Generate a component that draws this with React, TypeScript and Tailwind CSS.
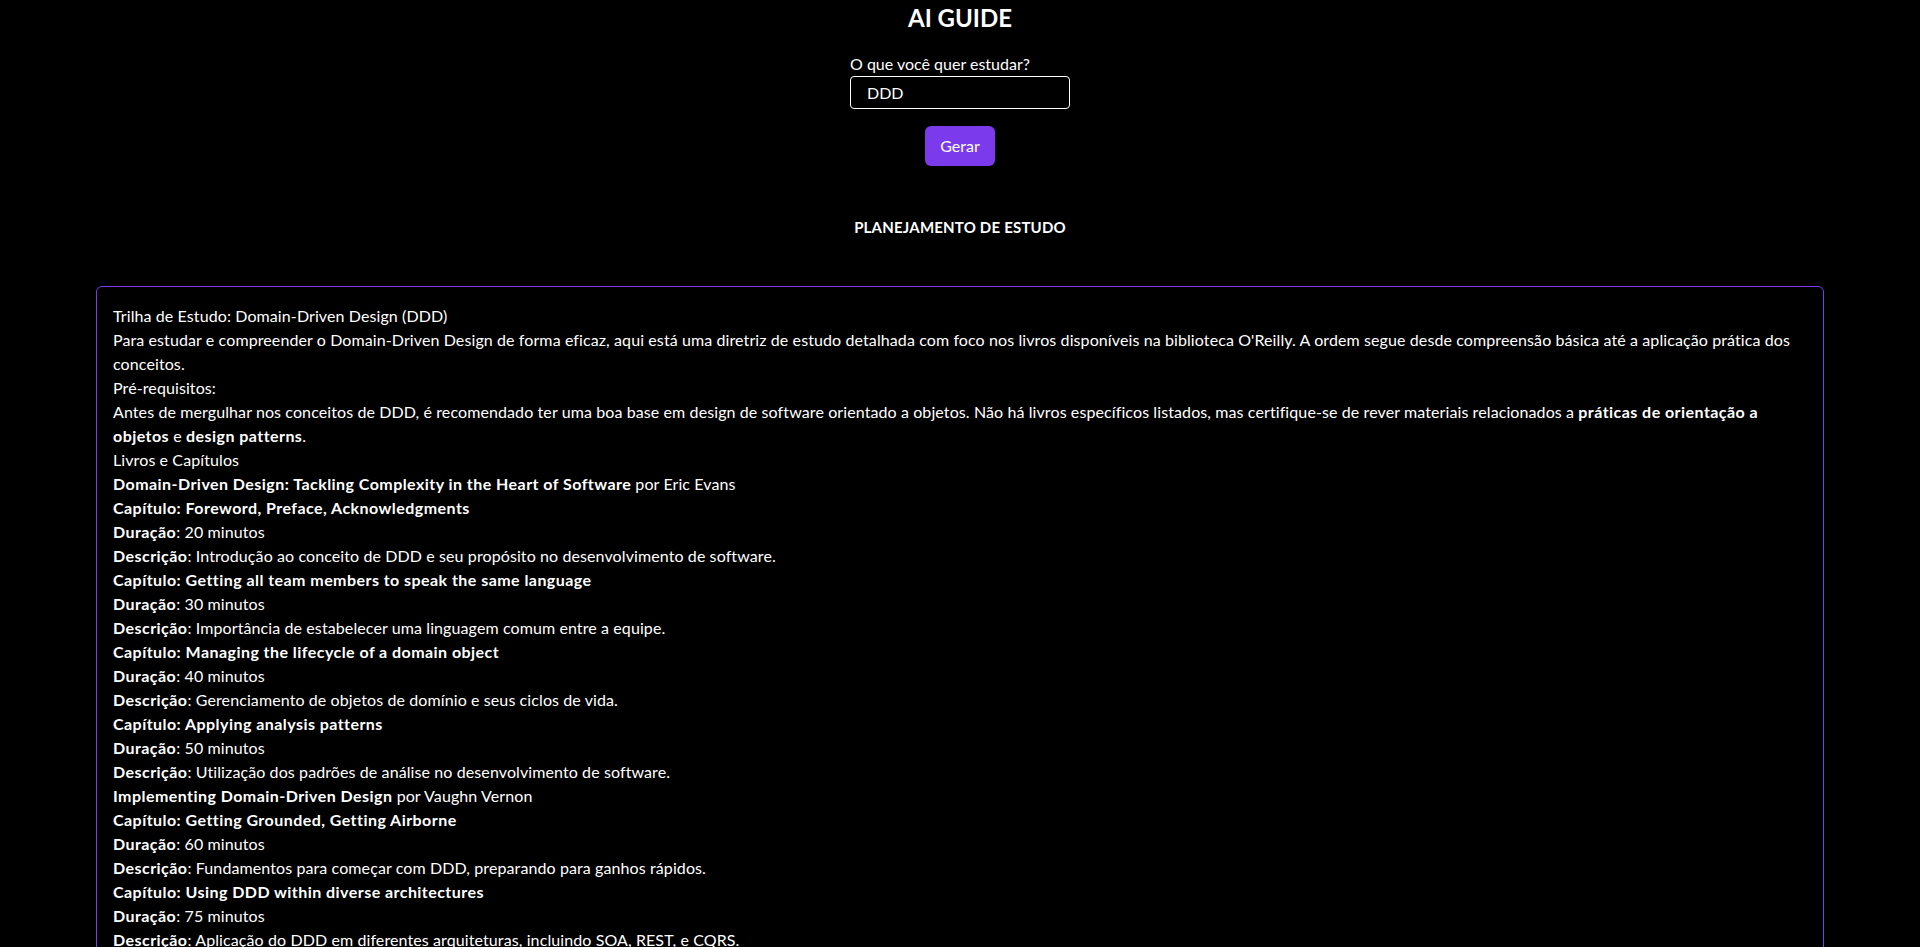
import React from "react";

const B = ({ children }: { children: React.ReactNode }) => <strong className="font-bold tracking-[0.45px]">{children}</strong>;

export default function App() {
  return (
    <div className="min-h-screen bg-black text-white font-['Lato','Liberation_Sans',sans-serif]">
      <div className="flex flex-col items-center">
        <h1 className="text-2xl font-bold leading-8 mt-0.5">AI GUIDE</h1>
        <div className="w-[220px] mt-[18px] flex flex-col">
          <label className="text-base leading-6">O que você quer estudar?</label>
          <input
            className="h-[33px] rounded border border-white bg-black px-4 text-base text-white outline-none"
            defaultValue="DDD"
          />
        </div>
        <button className="mt-[17px] h-10 w-[70px] rounded-md bg-[#7c3aed] text-base text-white">Gerar</button>
        <h2 className="mt-[51px] text-[15px] font-bold leading-5 tracking-[0.2px]">PLANEJAMENTO DE ESTUDO</h2>
        <div className="mt-[49px] w-[90%] rounded-md border border-[#7c3aed] px-4 pt-[17px] pb-4 text-base leading-6 tracking-[0.1px]">
          <p>Trilha de Estudo: Domain-Driven Design (DDD)</p>
          <p>
            Para estudar e compreender o Domain-Driven Design de forma eficaz, aqui está uma diretriz de estudo detalhada com foco nos livros disponíveis na biblioteca O'Reilly. A ordem segue desde compreensão básica até a aplicação prática dos conceitos.
          </p>
          <p>Pré-requisitos:</p>
          <p>
            Antes de mergulhar nos conceitos de DDD, é recomendado ter uma boa base em design de software orientado a objetos. Não há livros específicos listados, mas certifique-se de rever materiais relacionados a <B>práticas de orientação a<br />objetos</B> e <B>design patterns</B>.
          </p>
          <p>Livros e Capítulos</p>
          <p><B>Domain-Driven Design: Tackling Complexity in the Heart of Software</B> por Eric Evans</p>
          <p><B>Capítulo: Foreword, Preface, Acknowledgments</B></p>
          <p><B>Duração</B>: 20 minutos</p>
          <p><B>Descrição</B>: Introdução ao conceito de DDD e seu propósito no desenvolvimento de software.</p>
          <p><B>Capítulo: Getting all team members to speak the same language</B></p>
          <p><B>Duração</B>: 30 minutos</p>
          <p><B>Descrição</B>: Importância de estabelecer uma linguagem comum entre a equipe.</p>
          <p><B>Capítulo: Managing the lifecycle of a domain object</B></p>
          <p><B>Duração</B>: 40 minutos</p>
          <p><B>Descrição</B>: Gerenciamento de objetos de domínio e seus ciclos de vida.</p>
          <p><B>Capítulo: Applying analysis patterns</B></p>
          <p><B>Duração</B>: 50 minutos</p>
          <p><B>Descrição</B>: Utilização dos padrões de análise no desenvolvimento de software.</p>
          <p><B>Implementing Domain-Driven Design</B> por Vaughn Vernon</p>
          <p><B>Capítulo: Getting Grounded, Getting Airborne</B></p>
          <p><B>Duração</B>: 60 minutos</p>
          <p><B>Descrição</B>: Fundamentos para começar com DDD, preparando para ganhos rápidos.</p>
          <p><B>Capítulo: Using DDD within diverse architectures</B></p>
          <p><B>Duração</B>: 75 minutos</p>
          <p><B>Descrição</B>: Aplicação do DDD em diferentes arquiteturas, incluindo SOA, REST, e CQRS.</p>
          <p><B>Capítulo: Tactical design with Aggregates</B></p>
          <p><B>Duração</B>: 60 minutos</p>
          <p><B>Descrição</B>: Como projetar agregados eficazes e consistentes.</p>
        </div>
        <div className="h-8" />
      </div>
    </div>
  );
}
